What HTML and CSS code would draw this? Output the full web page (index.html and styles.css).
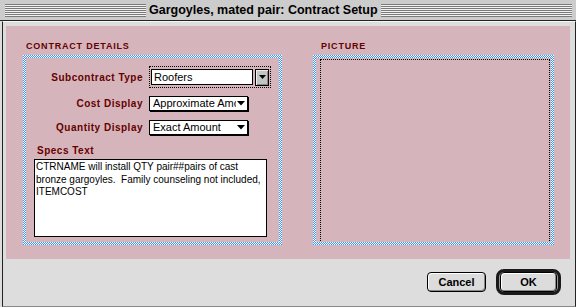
FILE: index.html
```html
<!DOCTYPE html>
<html lang="en">
<head>
    <meta charset="UTF-8">
    <title>Gargoyles, mated pair: Contract Setup</title>
    <link rel="stylesheet" href="styles.css">
</head>
<body>
    <div class="window">
        <div class="titlebar">
            <span class="stripes stripes-left"></span>
            <span class="title">Gargoyles, mated pair: Contract Setup</span>
            <span class="stripes"></span>
        </div>

        <div class="content">
            <div class="panel">
                <div class="group group-details">
                    <div class="heading">CONTRACT DETAILS</div>
                    <div class="frame">
                        <div class="frame-inner">
                            <div class="row row-type">
                                <span class="label">Subcontract Type</span>
                                <div class="combo">
                                    <span class="field">Roofers</span>
                                    <span class="combo-btn">
                                        <svg width="7" height="4" viewBox="0 0 7 4"><polygon points="0,0 7,0 3.5,4" fill="#000"/></svg>
                                    </span>
                                </div>
                            </div>
                            <div class="row row-cost">
                                <span class="label">Cost Display</span>
                                <div class="popup">
                                    <span class="popup-text">Approximate Amount</span>
                                    <svg class="popup-arrow" width="8" height="5" viewBox="0 0 8 5"><polygon points="0,0 8,0 4,4.5" fill="#000"/></svg>
                                </div>
                            </div>
                            <div class="row row-qty">
                                <span class="label">Quantity Display</span>
                                <div class="popup">
                                    <span class="popup-text">Exact Amount</span>
                                    <svg class="popup-arrow" width="8" height="5" viewBox="0 0 8 5"><polygon points="0,0 8,0 4,4.5" fill="#000"/></svg>
                                </div>
                            </div>
                            <div class="specs-label">Specs Text</div>
                            <div class="specs">CTRNAME will install QTY pair##pairs of cast
bronze gargoyles.  Family counseling not included,
ITEMCOST</div>
                        </div>
                    </div>
                </div>

                <div class="group group-picture">
                    <div class="heading">PICTURE</div>
                    <div class="frame">
                        <div class="frame-inner">
                            <div class="picture-well"></div>
                        </div>
                    </div>
                </div>
            </div>

            <div class="buttons">
                <button class="btn">Cancel</button>
                <div class="default-ring">
                    <button class="btn btn-ok">OK</button>
                </div>
            </div>
        </div>
    </div>
</body>
</html>
```

FILE: styles.css
```css
body {
    margin: 0;
    background: #eeeeee;
    font-family: "Liberation Sans", Arial, sans-serif;
    color: #000;
}
.window {
    width: 576px;
    height: 307px;
    display: flex;
    flex-direction: column;
    background: #dddddd;
}
.titlebar {
    height: 20px;
    border-bottom: 1px solid #222;
    background: #cccccc;
    display: flex;
    align-items: flex-start;
    gap: 3px;
    padding: 0 4px 0 5px;
}
.stripes {
    flex: 1;
    height: 13px;
    margin-top: 4px;
    background: repeating-linear-gradient(to bottom, #7a7a7a 0 1px, #f2f2f2 1px 2px);
}
.stripes-left {
    flex: none;
    width: 141px;
}
.title {
    font-weight: bold;
    font-size: 12.5px;
    line-height: 20px;
    white-space: nowrap;
}
.content {
    flex: 1;
    margin-left: 2px;
    border-left: 1px solid #222;
    border-right: 1px solid #222;
    border-bottom: 1px solid #888;
    border-top: 1px solid #f6f6f6;
    padding: 4px 0 0 3px;
}
.panel {
    width: 564px;
    height: 233px;
    box-sizing: border-box;
    background: #d5b5bb;
    display: flex;
    gap: 31px;
    padding: 12px 0 0 17px;
}
.group-details {
    width: 259px;
}
.group-picture {
    width: 241px;
}
.heading {
    height: 17px;
    line-height: 17px;
    font-size: 9px;
    font-weight: bold;
    letter-spacing: 0.8px;
    color: #660000;
    padding-left: 3px;
}
.group-picture .heading {
    padding-left: 8px;
}
.frame {
    height: 190px;
    box-sizing: border-box;
    padding: 3px;
    background: repeating-conic-gradient(#3399ff 0 25%, #ffffff 0 50%) 0 0 / 2px 2px;
}
.frame-inner {
    height: 100%;
    background: #d5b5bb;
    overflow: hidden;
}
.row {
    display: grid;
    grid-template-columns: 117px auto;
    column-gap: 6px;
    align-items: center;
    justify-items: start;
}
.label {
    justify-self: end;
    font-size: 10px;
    font-weight: bold;
    letter-spacing: 0.5px;
    color: #660000;
    white-space: nowrap;
}
.row-type {
    margin-top: 8px;
    height: 22px;
}
.row-cost {
    margin-top: 7px;
    height: 16px;
}
.row-qty {
    margin-top: 8px;
    height: 16px;
}
.combo {
    width: 122px;
    height: 22px;
    box-sizing: border-box;
    border: 1px dotted #000;
    display: flex;
    align-items: center;
    gap: 2px;
    padding-left: 1px;
}
.field {
    width: 102px;
    height: 16px;
    box-sizing: border-box;
    border: 1px solid #000;
    background: #fff;
    font-size: 11px;
    line-height: 14px;
    padding-left: 2px;
}
.combo-btn {
    width: 14px;
    height: 17px;
    box-sizing: border-box;
    border: 1px solid #000;
    background: #c4c4c4;
    box-shadow: inset 1px 1px #eee, inset -1px -1px #888;
    display: flex;
    align-items: center;
    justify-content: center;
}
.popup {
    width: 99px;
    height: 15px;
    box-sizing: border-box;
    border: 1px solid #000;
    background: #fff;
    box-shadow: 1px 1px 0 #000;
    display: flex;
    align-items: center;
    padding: 0 1px 0 3px;
}
.popup-text {
    flex: 1;
    overflow: hidden;
    white-space: nowrap;
    font-size: 11px;
    line-height: 13px;
}
.popup-arrow {
    flex: none;
    margin: 0 1px 0 1px;
}
.specs-label {
    margin: 9px 0 0 11px;
    height: 13px;
    line-height: 13px;
    font-size: 10px;
    font-weight: bold;
    letter-spacing: 0.5px;
    color: #660000;
}
.specs {
    margin: 2px 0 0 8px;
    width: 233px;
    height: 78px;
    box-sizing: border-box;
    border: 1px solid #000;
    background: #fff;
    padding: 1px 0 0 1px;
    font-size: 10px;
    line-height: 12.5px;
    white-space: pre;
    overflow: hidden;
}
.picture-well {
    margin: 1px 1px 0 4px;
    height: 184px;
    border: 1px dotted #000;
}
.buttons {
    display: flex;
    justify-content: flex-end;
    align-items: center;
    gap: 10px;
    margin-top: 10px;
    padding-right: 14px;
}
.btn {
    width: 59px;
    height: 20px;
    box-sizing: border-box;
    border: 1px solid #000;
    border-radius: 4px;
    background: #dcdcdc;
    box-shadow: inset 1px 1px #fff, inset -1px -1px #888;
    font-family: "Liberation Sans", Arial, sans-serif;
    font-size: 11px;
    font-weight: bold;
    color: #000;
    padding: 0;
}
.default-ring {
    border: 3px solid #1a1a1a;
    border-radius: 8px;
    padding: 0 1px;
    background: #999;
    display: flex;
}
.btn-ok {
    width: 57px;
}
```
